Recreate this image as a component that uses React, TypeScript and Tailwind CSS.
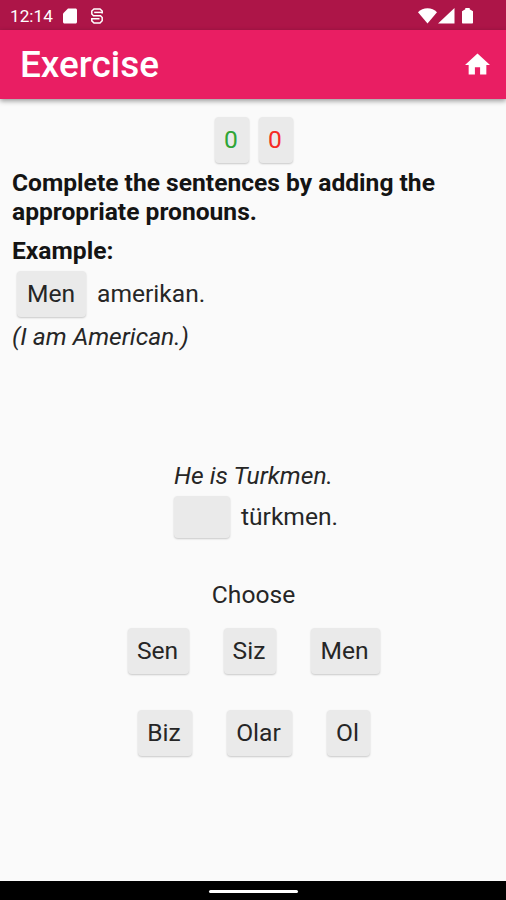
import React from 'react'
import clsx from 'clsx'

type ChipProps = {
  label?: string
  className?: string
}

const firstRow = [
  { label: 'Sen', className: 'h-[46px] w-[61px]' },
  { label: 'Siz', className: 'h-[46px] w-[52px]' },
  { label: 'Men', className: 'h-[46px] w-[69px]' },
]

const secondRow = [
  { label: 'Biz', className: 'h-[46px] w-[54px]' },
  { label: 'Olar', className: 'h-[46px] w-[65px]' },
  { label: 'Ol', className: 'h-[46px] w-[43px]' },
]

function Chip({ label, className }: ChipProps) {
  return (
    <button
      className={clsx(
        'flex shrink-0 items-center justify-center whitespace-nowrap rounded-[4px] bg-[#eaeaea] pb-[2px] pr-px shadow-[0_1px_2px_rgba(0,0,0,0.2)]',
        className,
      )}
    >
      {label}
    </button>
  )
}

function StatusBar() {
  return (
    <div className="flex h-[30px] items-center bg-[#ad1548] pl-[10px] pr-[33px] text-white">
      <span className="mt-0.5 w-[45px] whitespace-nowrap text-[17.2px] leading-5">12:14</span>
      {/* SD card */}
      <svg className="ml-2 mt-px h-4 w-[14px]" viewBox="0 0 14 16" fill="currentColor">
        <path d="M5 0.5h7.5c.8 0 1.500.700 1.500 1.500v12c0 .8-.7 1.500-1.500 1.500h-11C.7 15.500 0 14.800 0 14V5.500z" />
      </svg>
      {/* Running app */}
      <svg className="ml-[14px] mt-px h-4 w-[12px]" viewBox="0 0 12 16" fill="none" stroke="currentColor" strokeWidth="1.500">
        <path d="M11.200 5.500V3L9 .9H3L.8 3v3L2.500 7.800h7l1.700 1.700v3.300L9 15.100H3L.8 12.900v-2.200h7.700" />
        <path d="M3.200 4.400h8" />
      </svg>
      <div className="ml-auto mt-px flex items-center">
        <svg className="h-4 w-[19px]" viewBox="0 0 19 16" fill="currentColor">
          <path d="M9.500 15.500L0 4.200C2.500 1.500 5.800.2 9.500.2s7 1.300 9.500 4z" />
        </svg>
        <svg className="ml-[1px] h-4 w-[17px]" viewBox="0 0 17 16" fill="currentColor">
          <path d="M16.500 0v15.500H0z" />
        </svg>
        <svg className="ml-[7px] h-4 w-[11px]" viewBox="0 0 11 16" fill="currentColor">
          <path d="M3.300 0h4.400v1.300L11 3.200v11.300c0 .7-.4 1-1 1H1c-.6 0-1-.3-1-1V3.200l3.300-1.900z" />
        </svg>
      </div>
    </div>
  )
}

function AppBar() {
  return (
    <header className="relative flex h-[69px] items-center justify-between bg-[#e91e63] pl-5 pr-4 text-white shadow-[0_2px_5px_rgba(0,0,0,0.4)]">
      <h1 className="text-[36.9px] font-medium leading-10">Exercise</h1>
      <svg className="-mt-px h-[22px] w-[25px]" viewBox="0 0 26 22" fill="currentColor">
        <path d="M10.300 22v-7.500h5.400V22h6.500V12H26L13 .2 0 12h3.800v10z" />
      </svg>
    </header>
  )
}

export default function App() {
  return (
    <div className="flex h-[900px] w-[506px] flex-col overflow-hidden bg-[#fafafa] font-[Roboto,sans-serif] text-[24.6px] leading-[29px] text-[#262626]">
      <StatusBar />
      <AppBar />

      <main className="flex flex-1 flex-col">
        {/* Score: right and wrong answers */}
        <div className="mt-[18px] flex justify-center gap-[10px] pl-px">
          <Chip label="0" className="h-[46px] w-[34px] text-[#2fa536]" />
          <Chip label="0" className="h-[46px] w-[34px] text-[#f52b25]" />
        </div>

        <section className="px-3">
          <p className="mt-[5px] font-bold text-[#141414]">
            Complete the sentences by adding the
            <br />
            appropriate pronouns.
          </p>
          <p className="mt-[10px] font-bold text-[#141414]">Example:</p>
          <div className="mt-[6px] flex items-center gap-[11px] pl-[5px]">
            <Chip label="Men" className="h-[46px] w-[69px]" />
            <span className="pb-[2px]">amerikan.</span>
          </div>
          <p className="mt-[5px] italic">(I am American.)</p>
        </section>

        <section className="mt-[110px] flex flex-col items-center pl-px">
          <p className="italic">He is Turkmen.</p>
          <div className="mt-[6px] flex items-center gap-[11px] pl-[5px]">
            <Chip className="h-[42px] w-[56px]" />
            <span className="pb-[2px]">türkmen.</span>
          </div>
        </section>

        <section className="mt-[42px] flex flex-col items-center pl-px">
          <p>Choose</p>
          <div className="mt-[19px] flex gap-[35px]">
            {firstRow.map((word) => (
              <Chip key={word.label} {...word} />
            ))}
          </div>
          <div className="mt-9 flex gap-[35px]">
            {secondRow.map((word) => (
              <Chip key={word.label} {...word} />
            ))}
          </div>
        </section>
      </main>

      {/* Gesture bar */}
      <div className="flex h-[19px] justify-center bg-black pt-[9px]">
        <div className="h-[3px] w-[89px] rounded-full bg-white" />
      </div>
    </div>
  )
}
